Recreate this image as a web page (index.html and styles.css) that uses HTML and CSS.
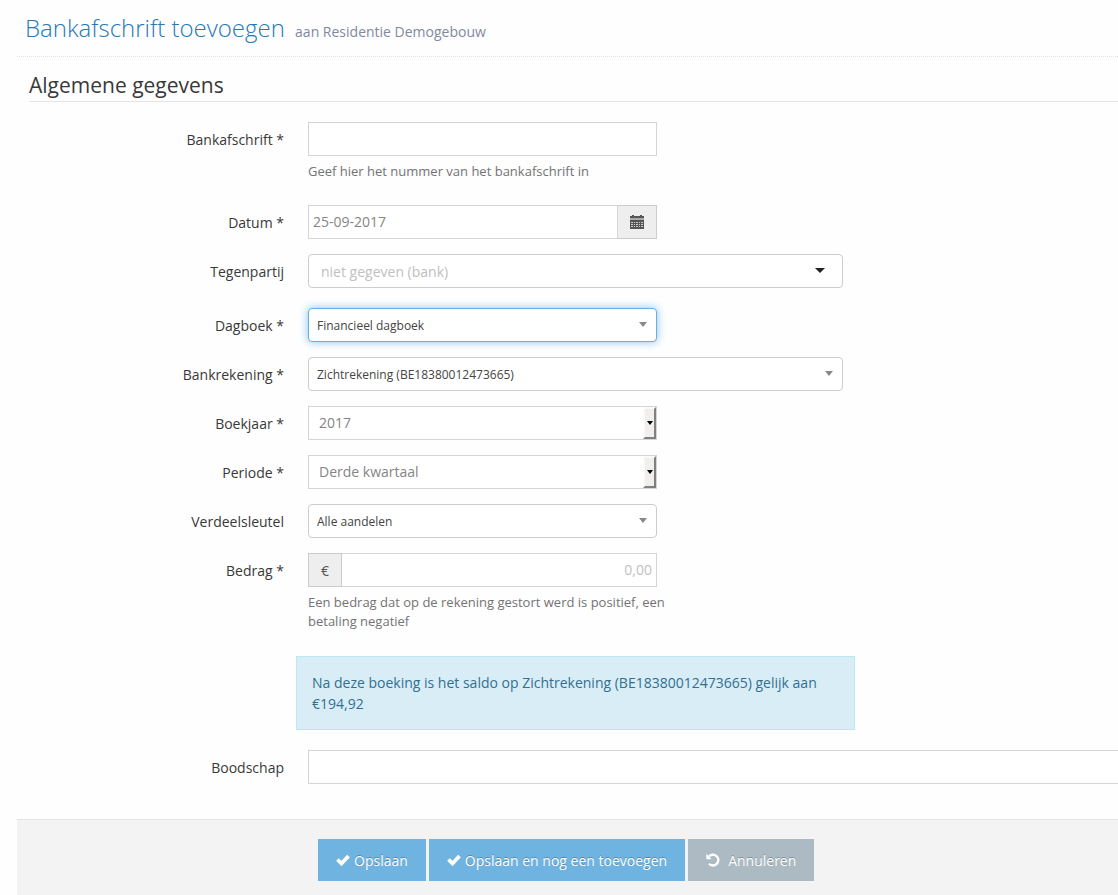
FILE: index.html
```html
<!doctype html>
<html lang="nl">
<head>
<meta charset="utf-8">
<title>Bankafschrift toevoegen</title>
<link rel="stylesheet" href="styles.css">
</head>

<body>
<div class="page-header">
	<h1>Bankafschrift toevoegen <small>aan Residentie Demogebouw</small></h1>
</div>

<form class="form" action="#" method="post">
	<h3 class="form-title">Algemene gegevens</h3>

	<div class="row">
		<label for="number">Bankafschrift *</label>
		<div class="field">
			<input type="text" class="input" id="number">
			<p class="help">Geef hier het nummer van het bankafschrift in</p>
		</div>
	</div>

	<div class="row">
		<label for="date">Datum *</label>
		<div class="field group">
			<input type="text" class="input" id="date" value="25-09-2017">
			<button type="button" class="addon addon-date" aria-label="Kies datum">
				<svg width="14" height="14" viewBox="0 0 14 14">
					<path fill="#555" d="M0 1h2V0h2v1h6V0h2v1h2v2H0z"/>
					<path fill="#aaa" d="M0 3h14v2H0z"/>
					<path fill="#555" d="M0 5h14v9H0z"/>
					<path fill="#ccc" d="M1 7h2v1H1zM4 7h1v1H4zM6 7h2v1H6zM9 7h1v1H9zM11 7h2v1h-2zM1 9h2v1H1zM4 9h1v1H4zM6 9h2v1H6zM9 9h1v1H9zM11 9h2v1h-2zM1 11h2v1H1zM4 11h1v1H4zM6 11h2v1H6zM9 11h1v1H9zM11 11h2v1h-2z"/>
				</svg>
			</button>
		</div>
	</div>

	<div class="row row-combo">
		<label for="party">Tegenpartij</label>
		<div class="field wide combo">
			<input type="text" class="input" id="party" placeholder="niet gegeven (bank)">
		</div>
	</div>

	<div class="row">
		<label for="journal">Dagboek *</label>
		<div class="field chosen active">
			<select id="journal"><option>Financieel dagboek</option></select>
		</div>
	</div>

	<div class="row">
		<label for="account">Bankrekening *</label>
		<div class="field wide chosen">
			<select id="account"><option>Zichtrekening (BE18380012473665)</option></select>
		</div>
	</div>

	<div class="row">
		<label for="year">Boekjaar *</label>
		<div class="field native">
			<select id="year"><option>2017</option></select>
		</div>
	</div>

	<div class="row">
		<label for="period">Periode *</label>
		<div class="field native">
			<select id="period"><option>Derde kwartaal</option></select>
		</div>
	</div>

	<div class="row">
		<label for="key">Verdeelsleutel</label>
		<div class="field chosen">
			<select id="key"><option>Alle aandelen</option></select>
		</div>
	</div>

	<div class="row">
		<label for="amount">Bedrag *</label>
		<div class="field">
			<div class="group">
				<span class="addon addon-euro">€</span>
				<input type="text" class="input amount" id="amount" placeholder="0,00">
			</div>
			<p class="help">Een bedrag dat op de rekening gestort werd is positief, een betaling negatief</p>
		</div>
	</div>

	<div class="alert">Na deze boeking is het saldo op Zichtrekening (BE18380012473665) gelijk aan €194,92</div>

	<div class="row">
		<label for="message">Boodschap</label>
		<div class="field full">
			<input type="text" class="input" id="message">
		</div>
	</div>

	<div class="actions">
		<button type="submit" class="btn">
			<svg width="14" height="12" viewBox="0 0 14 12"><path d="M1.5 5.5l4 4 7-7.5" fill="none" stroke="#fff" stroke-width="3.8"/></svg>
			Opslaan
		</button>
		<button type="submit" class="btn">
			<svg width="14" height="12" viewBox="0 0 14 12"><path d="M1.5 5.5l4 4 7-7.5" fill="none" stroke="#fff" stroke-width="3.8"/></svg>
			Opslaan en nog een toevoegen
		</button>
		<button type="reset" class="btn btn-cancel">
			<svg width="14" height="14" viewBox="0 0 14 14"><path d="M3 3.4A5.4 5.4 0 1 1 3 10.8" fill="none" stroke="#fff" stroke-width="2.4"/><path d="M0.3 0.8v5.4h5.4z" fill="#fff"/></svg>
			Annuleren
		</button>
	</div>
</form>
</body>
</html>
```
FILE: styles.css
```css
*,*::before{ box-sizing:border-box;}
body{ margin:0; padding-left:17px; min-height:100vh; display:flex; flex-direction:column; background:#fefefe; color:#393939; font:14px/21px "Open Sans", sans-serif;}
h1,h3,p{ margin:0; font-weight:400;}
input,select,button{ font:inherit; margin:0; border-radius:0;}

.page-header{ padding:12px 8px 8px; border-bottom:1px dotted #e2e2e2;}
.page-header h1{ color:#2679b5; font-size:24px; line-height:32px; font-weight:300;}
.page-header small{ margin-left:4px; color:#8089a0; font-size:14px; font-weight:400;}

.form{ flex:1; display:flex; flex-direction:column;}
.form-title{ margin:12px 0 20px 12px; border-bottom:1px solid #e5e5e5; font-size:21px; line-height:32px;}

.row{ display:grid; grid-template-columns:255px 1fr; column-gap:24px; margin:0 0 15px 12px;}
.row label{ padding-top:7px; text-align:right;}
.row-combo{ margin-bottom:20px;}

.field{ width:100%; max-width:349px; position:relative;}
.wide{ max-width:535px;}
.full{ max-width:none;}
.full .input{ border-right:0;}
.input{ display:block; width:100%; height:34px; padding:4px 4px 6px; border:1px solid #d5d5d5; background:#fff; color:#858585;}
.input::placeholder{ color:#c0c0c0; opacity:1;}
.help{ margin:6px -12px 9px 0; color:#737373; font-size:13px; line-height:19px;}

.group{ display:flex;}
.group .input{ flex:1; min-width:0;}
.addon{ display:flex; align-items:center; justify-content:center; height:34px; padding:0; border:1px solid #ccc; background:#eee; color:#555;}
.addon-date{ width:39px; border-left:0;}
.addon-euro{ width:34px;}
.amount{ border-left:0; text-align:right;}

.combo .input{ padding:5px 12px; border-color:#ccc; border-radius:4px;}
.combo::after{ content:""; position:absolute; right:18px; top:14px; border:5px solid transparent; border-top-color:#222; border-bottom:0;}

.field select{ display:block; width:100%; height:34px; appearance:none; outline:0; background:#fff;}
.chosen select{ padding:0 8px; border:1px solid #ccc; border-radius:4px; color:#444; font-size:12px;}
.chosen::after{ content:""; position:absolute; right:10px; top:14px; border:4px solid transparent; border-top:5px solid #888; border-bottom:0;}
.active select{ border-color:#66afe9; box-shadow:0 0 8px rgba(102,175,233,.8);}

.native select{ padding:0 10px 2px; border:1px solid #d5d5d5; color:#858585;}
.native::before{ content:""; position:absolute; right:1px; top:1px; width:13px; height:32px; background:#f0efee; border:2px solid; border-color:#fafafa #808080 #808080 #fafafa; pointer-events:none;}
.native::after{ content:""; position:absolute; right:4px; top:15px; border:3px solid transparent; border-top:4px solid #000; border-bottom:0;}

.alert{ max-width:559px; margin:1px 0 20px 279px; padding:15px; border:1px solid #bce8f1; background:#d9edf7; color:#31708f;}

.actions{ flex:1; display:flex; align-items:flex-start; gap:3px; margin-top:20px; padding:19px 0 14px 301px; border-top:1px solid #e5e5e5; background:#f3f3f3;}
.btn{ display:flex; align-items:center; gap:4px; height:42px; padding:0 18px; border:0; background:#6fb3e0; color:#fff; white-space:nowrap; text-shadow:0 -1px 0 rgba(0,0,0,.25);}
.btn-cancel{ gap:8px; background:#abbac3;}
```
